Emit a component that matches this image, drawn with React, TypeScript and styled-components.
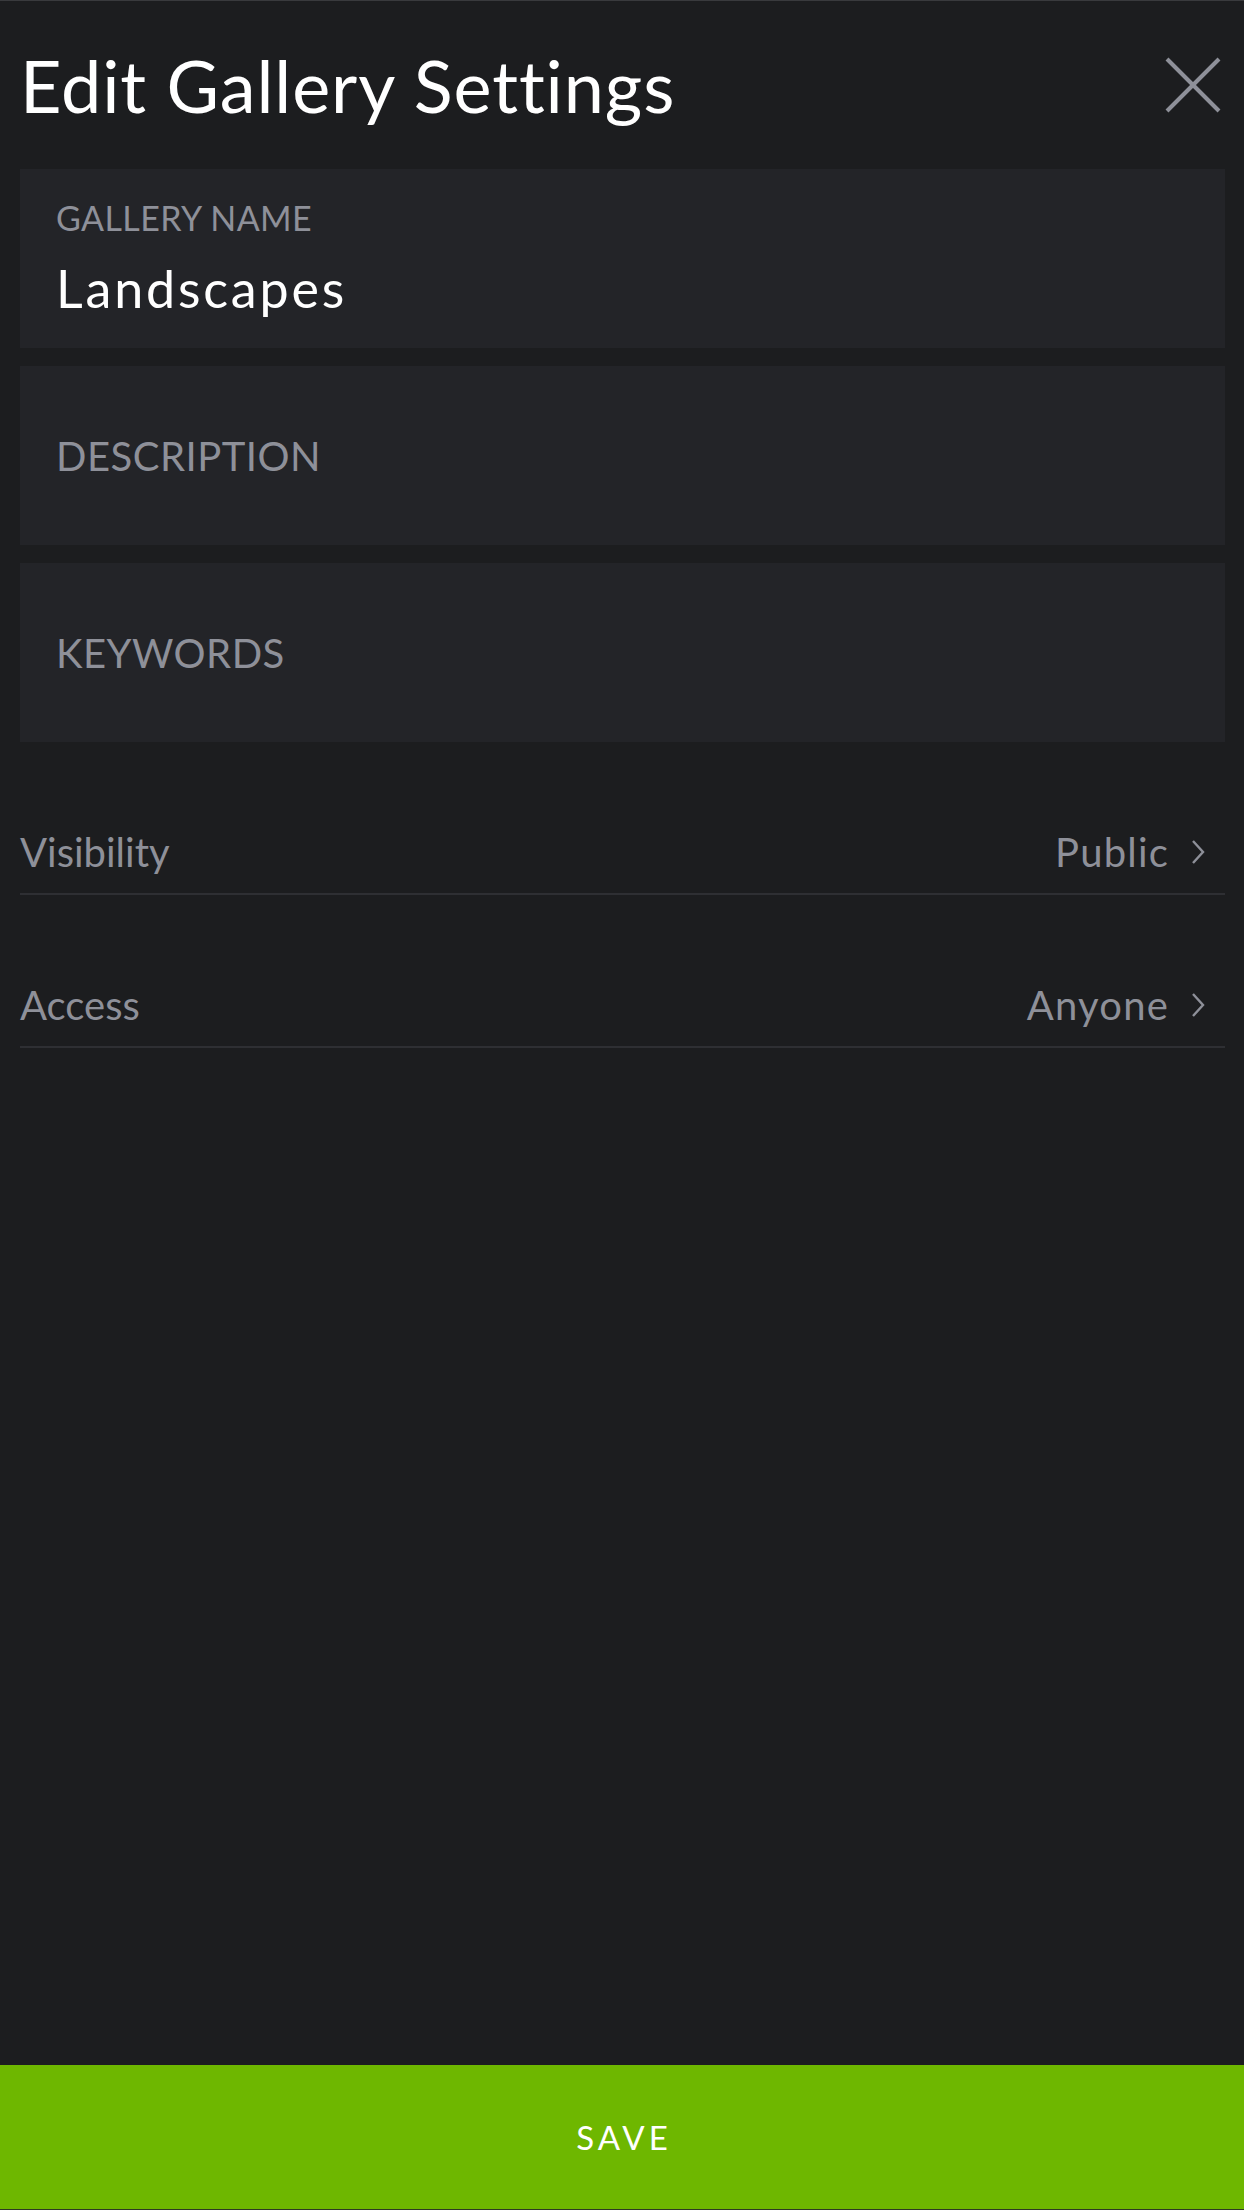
import React from "react";
import styled, { createGlobalStyle } from "styled-components";

const GlobalStyle = createGlobalStyle`
  * {
    box-sizing: border-box;
  }
  html,
  body {
    margin: 0;
    padding: 0;
    background: #1c1d1f;
  }
  body {
    font-family: Lato, "Liberation Sans", sans-serif;
  }
`;

interface FieldProps {
  label: string;
  value?: string;
}

interface OptionProps {
  label: string;
  value: string;
}

const Chevron = () => (
  <svg width="14" height="26" viewBox="0 0 14 26" fill="none">
    <polyline
      points="2,2 12,13 2,24"
      stroke="#8e9099"
      strokeWidth="2.4"
      strokeLinejoin="miter"
    />
  </svg>
);

const CloseIcon = () => (
  <svg width="56" height="56" viewBox="0 0 56 56" fill="none">
    <line x1="2" y1="2" x2="54" y2="54" stroke="#8e9099" strokeWidth="4" />
    <line x1="54" y1="2" x2="2" y2="54" stroke="#8e9099" strokeWidth="4" />
  </svg>
);

const Field: React.FC<FieldProps> = ({ label, value }) => {
  if (value === undefined) {
    return (
      <FieldBox>
        <Placeholder>{label}</Placeholder>
      </FieldBox>
    );
  }
  return (
    <FieldBox filled>
      <FloatLabel>{label}</FloatLabel>
      <Value>{value}</Value>
    </FieldBox>
  );
};

const Option: React.FC<OptionProps> = ({ label, value }) => (
  <OptionRow>
    <OptionLabel>{label}</OptionLabel>
    <OptionValue>
      <span>{value}</span>
      <Chevron />
    </OptionValue>
  </OptionRow>
);

export default function App() {
  return (
    <Page>
      <GlobalStyle />
      <Header>
        <Title>Edit Gallery Settings</Title>
        <CloseButton aria-label="Close">
          <CloseIcon />
        </CloseButton>
      </Header>
      <Form>
        <Field label="GALLERY NAME" value="Landscapes" />
        <Field label="DESCRIPTION" />
        <Field label="KEYWORDS" />
      </Form>
      <Options>
        <Option label="Visibility" value="Public" />
        <Option label="Access" value="Anyone" />
      </Options>
      <Spacer />
      <SaveButton>SAVE</SaveButton>
    </Page>
  );
}

const Page = styled.div`
  min-height: 2210px;
  display: flex;
  flex-direction: column;
  background: #1c1d1f;
  border-top: 1px solid #393a3d;
`;

const Header = styled.header`
  display: flex;
  align-items: flex-start;
  justify-content: space-between;
  padding: 41px 23px 41px 20px;
`;

const Title = styled.h1`
  margin: 0;
  font-size: 72px;
  line-height: 1.2;
  font-weight: 400;
  letter-spacing: 0.9px;
  color: #ffffff;
`;

const CloseButton = styled.button`
  margin-top: 15px;
  padding: 0;
  border: 0;
  background: none;
  display: flex;
  cursor: pointer;
`;

const Form = styled.div`
  display: flex;
  flex-direction: column;
  gap: 18px;
  padding: 0 19px 0 20px;
`;

const FieldBox = styled.div<{ filled?: boolean }>`
  height: 179px;
  background: #232428;
  display: flex;
  flex-direction: column;
  justify-content: ${(p) => (p.filled ? "flex-start" : "center")};
  padding: ${(p) => (p.filled ? "29px 36px 0" : "0 36px")};
`;

const FloatLabel = styled.div`
  font-size: 34px;
  line-height: 1.2;
  letter-spacing: 0.4px;
  color: #8e9099;
`;

const Value = styled.div`
  margin-top: 18px;
  font-size: 52px;
  line-height: 1.2;
  letter-spacing: 2.8px;
  color: #ffffff;
`;

const Placeholder = styled.div`
  font-size: 40px;
  line-height: 1.2;
  letter-spacing: 0.5px;
  color: #8e9099;
`;

const Options = styled.div`
  display: flex;
  flex-direction: column;
  padding: 0 19px 0 20px;
`;

const OptionRow = styled.div`
  display: flex;
  align-items: center;
  justify-content: space-between;
  padding: 86px 20px 17px 0;
  border-bottom: 2px solid #2e2f33;
  font-size: 40px;
  line-height: 1.2;
  color: #8e9099;
`;

const OptionLabel = styled.span`
  letter-spacing: 0;
`;

const OptionValue = styled.div`
  display: flex;
  align-items: center;
  gap: 22px;
  letter-spacing: 1.2px;
`;

const Spacer = styled.div`
  flex: 1;
`;

const SaveButton = styled.button`
  height: 145px;
  border: 0;
  border-bottom: 1px solid #2f3a22;
  background: #6eb700;
  color: #ffffff;
  font-family: Lato, "Liberation Sans", sans-serif;
  font-size: 33px;
  letter-spacing: 4px;
  text-indent: 4px;
  cursor: pointer;
`;
